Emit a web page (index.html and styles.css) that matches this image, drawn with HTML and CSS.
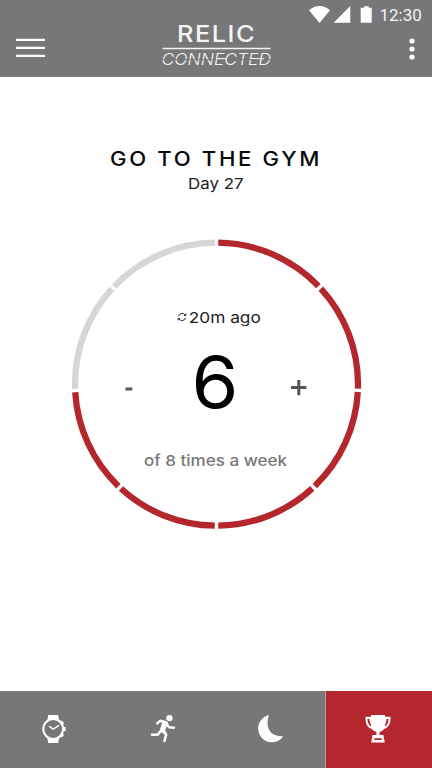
FILE: index.html
```
<!DOCTYPE html>
<html lang="en">
<head>
<meta charset="utf-8">
<title>Relic Connected</title>
<link rel="stylesheet" href="styles.css">
</head>
<body>
<div class="app">
  <header class="header">
    <div class="status">
      <svg class="status-icons" viewBox="0 0 66 20">
        <path d="M1 5.2Q11.5-3.2 22 5.2L11.5 18Z M25.5 17.8L42.3 1V17.8Z M52.7 2.8H56V1.2H60.7V2.8H63.7V17.8H52.7Z"/>
      </svg>
      <span class="time">12:30</span>
    </div>
    <div class="toolbar">
      <svg class="menu" viewBox="0 0 30 20"><path d="M0 1.8H29M0 9.8H29M0 17.8H29"/></svg>
      <svg class="brand" viewBox="0 0 112 46">
        <text class="relic" x="17" y="22" textLength="79" lengthAdjust="spacingAndGlyphs">RELIC</text>
        <path class="brand-rule" d="M2.5 28.5H110.5"/>
        <text class="connected" x="1.5" y="44.5" textLength="109.5" lengthAdjust="spacingAndGlyphs">CONNECTED</text>
        <path class="brand-cut" d="M0 39.7H56M68 39.7H96M105 39.7H112"/>
        <path class="brand-link" d="M58 38.7H67M97 38.7H104"/>
      </svg>
      <svg class="more" viewBox="0 0 6 24"><circle cx="3" cy="3" r="2.6"/><circle cx="3" cy="11" r="2.6"/><circle cx="3" cy="19" r="2.6"/></svg>
    </div>
  </header>
  <main class="main">
    <svg class="heading" viewBox="0 0 432 60">
      <text class="title" x="110" y="26.2" textLength="212" lengthAdjust="spacingAndGlyphs">GO TO THE GYM</text>
      <text class="day" x="188" y="49" textLength="55.5" lengthAdjust="spacingAndGlyphs">Day 27</text>
    </svg>
    <svg class="dial" viewBox="71 238 292 292">
      <g transform="rotate(-90 216.5 384.2)">
        <circle class="arc todo" cx="216.5" cy="384.2" r="141.5" pathLength="360" stroke-dasharray="0 268.1 44.2 1.4 45.7 .6"/>
        <circle class="arc done" cx="216.5" cy="384.2" r="141.5" pathLength="360" stroke-dasharray="0 .7 45.4 1.4 44.3 1.4 42.8 1.4 41.9 1.4 41.8 1.4 42.8 93.3"/>
      </g>
      <path class="sync" d="M178.4 316.2A3.7 3.7 0 0 1 185 315M185.6 317.8A3.7 3.7 0 0 1 179 319M185.9 313.6V315.4H184M178.1 320.4V318.6H180"/>
      <text class="ago" x="188.8" y="322.5" textLength="72" lengthAdjust="spacingAndGlyphs">20m ago</text>
      <text class="count" x="191.5" y="408.3" textLength="47" lengthAdjust="spacingAndGlyphs">6</text>
      <path class="step" d="M125.5 389H132.3M291 387.6H306.4M298.8 380V395.2"/>
      <text class="goal" x="144" y="466" textLength="143" lengthAdjust="spacingAndGlyphs">of 8 times a week</text>
    </svg>
  </main>
  <nav class="nav">
    <div class="tab"><svg viewBox="0 0 28 30">
      <path d="M8.2 1H18.2L19.2 7H7.2ZM7.2 23H19.2L18.2 29H8.2Z"/>
      <circle cx="13.2" cy="15" r="9.9" class="watch-face"/>
      <path d="M20.3 6.6L22.4 7L24 9.2L22.8 11ZM23 13H25.7V17H23ZM20.3 23.4L22.4 23L24 20.8L22.8 19Z"/>
      <path class="line" d="M9 12.2L13.2 15.2L19 11.3"/>
    </svg></div>
    <div class="tab runner"><svg viewBox="0 0 28 30">
      <circle cx="20.4" cy="4.1" r="3.2"/>
      <path class="limb" d="M8.2 9.4L11.4 6.7L16.4 8.1M17.2 9.4L20.1 13.2L25 13.7M11.2 17.5L9 20.5L3 20.7M12.7 16.7L17.2 20.4L15.4 27"/>
      <path d="M13.7 6.7L19.1 8.2L16.1 16.6L18 19.2L10.6 17.1Z"/>
    </svg></div>
    <div class="tab moon"><svg viewBox="0 0 28 30"><path d="M13 1C8.5 14 14.5 23 27.3 22.3A13.8 13.8 0 1 1 13 1Z"/></svg></div>
    <div class="tab active"><svg viewBox="0 0 28 30">
      <path d="M7 1H21V2.8H26.5C26.8 9 25 13.6 20.2 15C18.8 16.7 17.1 17.5 15.6 17.8V20.9H19.4L20.8 28.5H7.2L8.6 20.9H12.4V17.8C10.9 17.5 9.2 16.7 7.8 15C3 13.6 1.2 9 1.5 2.8H7ZM3.4 4.9C3.6 8.6 5 11.3 7 12.5V10.5C6 9 5.5 7 5.5 4.9ZM24.6 4.9H22.5C22.5 7 22 9 21 10.5V12.5C23 11.3 24.4 8.6 24.6 4.9ZM10.5 24.2L10.2 26.1H17.8L17.5 24.2Z" fill-rule="evenodd"/>
    </svg></div>
  </nav>
</div>
</body>
</html>
```
FILE: styles.css
```
* { box-sizing: border-box; }
body { margin: 0; background: #fff; font-family: Inter, "Liberation Sans", sans-serif; }
svg { display: block; flex: none; fill: #fff; }
.app { width: 432px; height: 768px; display: flex; flex-direction: column; overflow: hidden; }
.header { height: 77px; background: #777779; }
.status { height: 25px; display: flex; justify-content: flex-end; padding: 5px 9.5px 0 0; }
.status-icons { width: 66px; height: 20px; margin-right: 6px; }
.time { font: 400 17px/20px Roboto, sans-serif; color: #f4f4f4; width: 43px; white-space: nowrap; }
.toolbar { height: 52px; display: flex; align-items: flex-start; padding: 0 17px 0 16px; }
.menu { width: 30px; height: 20px; margin-top: 13px; stroke: #fff; stroke-width: 2.2; }
.brand { width: 112px; height: 46px; margin: -5px 0 0 114px; overflow: visible; }
.relic { font-size: 22.5px; font-weight: 500; letter-spacing: 1.3px; fill: #f4f4f4; }
.connected { font-size: 16.5px; font-style: italic; font-weight: 300; fill: #f4f4f4; }
.brand-rule { stroke: #f4f4f4; stroke-width: 1.5; }
.brand-cut { stroke: #777779; stroke-width: 1; }
.brand-link { stroke: #f4f4f4; stroke-width: 1; }
.more { width: 6px; height: 24px; margin: 12.5px 0 0 auto; }
.main { flex: 1; display: flex; flex-direction: column; align-items: center; padding-top: 63px; }
.heading { width: 432px; height: 60px; }
.dial { width: 292px; height: 292px; margin: 38px 0 0 2px; }
.title { font-size: 20px; font-weight: 500; letter-spacing: 2.4px; fill: #080808; }
.day { font-size: 15px; fill: #222; }
.arc { fill: none; stroke-width: 6.3; }
.todo { stroke: #d6d6d6; }
.done { stroke: #b4272d; }
.sync { fill: none; stroke: #222; stroke-width: 1; }
.ago { font-size: 15px; fill: #222; }
.count { font-size: 71px; font-weight: 400; fill: #000; }
.step { fill: none; stroke: #555; stroke-width: 3; }
.goal { font-size: 15px; font-weight: 500; fill: #777; }
.nav { height: 77px; display: grid; grid-template-columns: 108px 108px 109px 107px; background: #777779; }
.tab { display: flex; justify-content: center; padding-top: 23px; }
.tab svg { width: 28px; height: 30px; }
.runner { padding-left: 2px; }
.moon { padding-right: 2px; }
.active { background: #b4272d; border-left: 1px solid #a8a0a1; padding-right: 2px; }
.watch-face { fill: #777779; stroke: #fff; stroke-width: 2; }
.line { fill: none; stroke: #fff; stroke-width: 1.5; }
.limb { fill: none; stroke: #fff; stroke-width: 2.5; stroke-linecap: round; stroke-linejoin: round; }
```
